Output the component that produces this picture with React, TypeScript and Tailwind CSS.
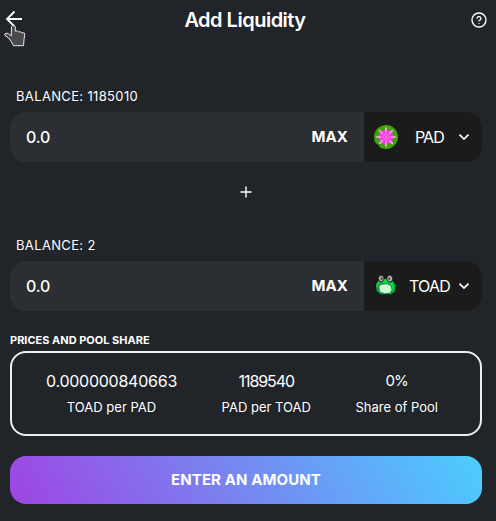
import React from 'react';

function ChevronDown() {
  return (
    <svg width="12" height="8" viewBox="0 0 12 8" fill="none" stroke="#fff" strokeWidth="1.7">
      <path d="M1.500 1.700 6 6l4.500-4.300" />
    </svg>
  );
}

function PadIcon() {
  const rays = [0, 45, 90, 135, 180, 225, 270, 315];
  return (
    <svg width="24" height="24" viewBox="0 0 24 24">
      <path d="M12 0a12 12 0 1 1-7.2 21.6L6.4 18.8 4.3 20.3 1.2 17.2A12 12 0 0 1 12 0Z" fill="#3da606" />
      <path d="m12 3.8 2.6 2 3.4-.2.3 3.5 1.800 2.900-1.800 2.900-.3 3.500-3.400-.2-2.600 2-2.600-2-3.400.2-.3-3.500L3.900 12l1.800-2.900.3-3.500 3.400.2Z" fill="#f53aed" />
      {rays.map((angle) => (
        <path key={angle} d="m11.500 8-.5-5L12 1.800l1 1.200-.5 5Z" fill="#f7a5df" transform={`rotate(${angle} 12 12)`} />
      ))}
      <circle cx="12" cy="12" r="4.300" fill="#f73be4" />
      <circle cx="12" cy="12" r="2.500" fill="#f72fdc" stroke="#f783ed" strokeWidth="1" />
      <circle cx="12" cy="12" r="1" fill="#f99bea" />
    </svg>
  );
}

function ToadIcon() {
  return (
    <svg width="24" height="24" viewBox="0 0 24 24">
      <path d="M1.200 8 4 6l16 0 1.900 2.500 1.200 4-1.400.500.200 3-3.500 4-5 1.200-6.500-1-3.500-4-.700-3L1 11Z" fill="#05180b" />
      <path d="M4 7 11 5l8 2 2.300 5.500-.5 5-3.300 2.700-11 0L2.800 17 2 12Z" fill="#07ae3c" />
      <path d="m9.500 5 3.800 0 .5 4.500-2.500 1-2.500-1.500ZM15 10l4.300-1.500.5 6-1.700 3.200L15.500 13Z" fill="#05e541" />
      <path d="m2.300 9.500 2.700-2-.5 4-1.200 3Z" fill="#16d84d" />
      <path d="M20.500 9.500 23 12l-1.600.400Z" fill="#08a83b" />
      <ellipse cx="7.200" cy="4.500" rx="2.800" ry="3.200" fill="#b4b4b4" stroke="#111" strokeWidth=".8" />
      <ellipse cx="15.700" cy="4.600" rx="2.800" ry="3.300" fill="#c7c7c7" stroke="#111" strokeWidth=".8" />
      <ellipse cx="7.700" cy="4.500" rx="1.100" ry="1.700" fill="#555" />
      <ellipse cx="15.300" cy="4.700" rx="1.100" ry="1.800" fill="#555" />
      <path d="M4.800 12.500 7 10.200l6.500-.4 3.700 2.200.9 4-2 3.200-5.400.500-5.200-1.600Z" fill="#c9ffd8" stroke="#0b3318" strokeWidth=".6" />
    </svg>
  );
}

function HandCursor() {
  return (
    <svg className="absolute left-[4px] top-[24px]" width="22" height="23" viewBox="0 0 22 23">
      <path
        d="M7.500 2.800C7.500 1.300 11.200 1 11.300 3v4.200l2.200-.3 1.200 1 2-.1 1.300 1 2.300.2.500 1.300-.8 5.200-.5 6.200h-10L7 17.200 4.500 14 1 11.500.8 10l1.400-.8 2.400.5 2.700 2.200Z"
        fill="#4b4b4b"
        stroke="#e8e8e8"
        strokeWidth="1"
        strokeLinejoin="round"
      />
    </svg>
  );
}

type TokenFieldProps = {
  label: string;
  symbol: string;
  icon: React.ReactNode;
};

function TokenField({ label, symbol, icon }: TokenFieldProps) {
  return (
    <section>
      <div className="flex h-[26px] items-start pl-1.5 text-[13px] leading-[21px] tracking-[0.35px]">{label}</div>
      <div className="flex h-[50px] overflow-hidden rounded-2xl">
        <div className="flex w-[354px] items-center justify-between bg-[#2b2e32] pl-4 pr-4">
          <span className="text-[16px] font-medium tracking-[-0.2px]">0.0</span>
          <span className="text-[15px] font-bold tracking-[0.1px]">MAX</span>
        </div>
        <button className="flex flex-1 items-center bg-[#1b1b1b] pl-2.5 pr-3">
          {icon}
          <span className="flex-1 pl-[3px] text-center text-[16px] tracking-[-0.8px]">{symbol}</span>
          <ChevronDown />
        </button>
      </div>
    </section>
  );
}

type StatProps = { value: React.ReactNode; caption: string };

function Stat({ value, caption }: StatProps) {
  return (
    <div className="flex flex-col items-center whitespace-nowrap">
      <div className="flex h-6 items-center text-[16px] leading-6">{value}</div>
      <span className="mt-1 text-[13px] leading-[21px]">{caption}</span>
    </div>
  );
}

export default function App() {
  return (
    <main className="relative h-[521px] w-[496px] overflow-hidden bg-[#212429] font-['Inter',sans-serif] text-white">
      <header className="flex h-10 items-center justify-between pl-[5px] pr-[9px]">
        <svg width="18" height="18" viewBox="0 0 18 18" fill="none" stroke="#fff" strokeWidth="1.8" className="mb-0.5">
          <path d="M17 9H2M9.500 1.500 2 9l7.500 7.500" />
        </svg>
        <h1 className="mr-1 text-[20px] font-semibold leading-7 tracking-[-0.5px]">Add Liquidity</h1>
        <svg width="16" height="16" viewBox="0 0 24 24" fill="none" stroke="#fff" strokeWidth="2" strokeLinecap="round" strokeLinejoin="round">
          <circle cx="12" cy="12" r="10.500" />
          <path d="M9.090 9a3 3 0 0 1 5.830 1c0 2-3 3-3 3M12 17h.01" />
        </svg>
      </header>
      <HandCursor />
      <div className="pl-2.5 pr-3.5 pt-[46px]">
        <TokenField label="BALANCE: 1185010" symbol="PAD" icon={<PadIcon />} />
        <div className="flex h-[73px] justify-center pt-6">
          <svg width="12" height="12" viewBox="0 0 12 12" stroke="#fff" strokeWidth="1.400">
            <path d="M6 .5v11M.5 6h11" />
          </svg>
        </div>
        <TokenField label="BALANCE: 2" symbol="TOAD" icon={<ToadIcon />} />
        <h2 className="mt-[21px] text-[11px] font-bold leading-4">PRICES AND POOL SHARE</h2>
        <div className="mt-[3px] flex h-[85px] justify-between rounded-2xl border-2 border-[#edeef2] pl-[34px] pr-[42px] pt-4">
          <Stat value={<span className="tracking-[-0.25px]">0.000000840663</span>} caption="TOAD per PAD" />
          <Stat value={<span className="tracking-[-1.1px]">1189540</span>} caption="PAD per TOAD" />
          <Stat value={<span className="text-[15px] tracking-[-0.8px]">0%</span>} caption="Share of Pool" />
        </div>
        <button className="mt-5 flex h-12 w-full items-center justify-center rounded-2xl bg-[linear-gradient(60deg,#9f44e3_0%,#4bceff_100%)] pt-px text-[15px] font-bold tracking-[0.1px]">
          ENTER AN AMOUNT
        </button>
      </div>
    </main>
  );
}
